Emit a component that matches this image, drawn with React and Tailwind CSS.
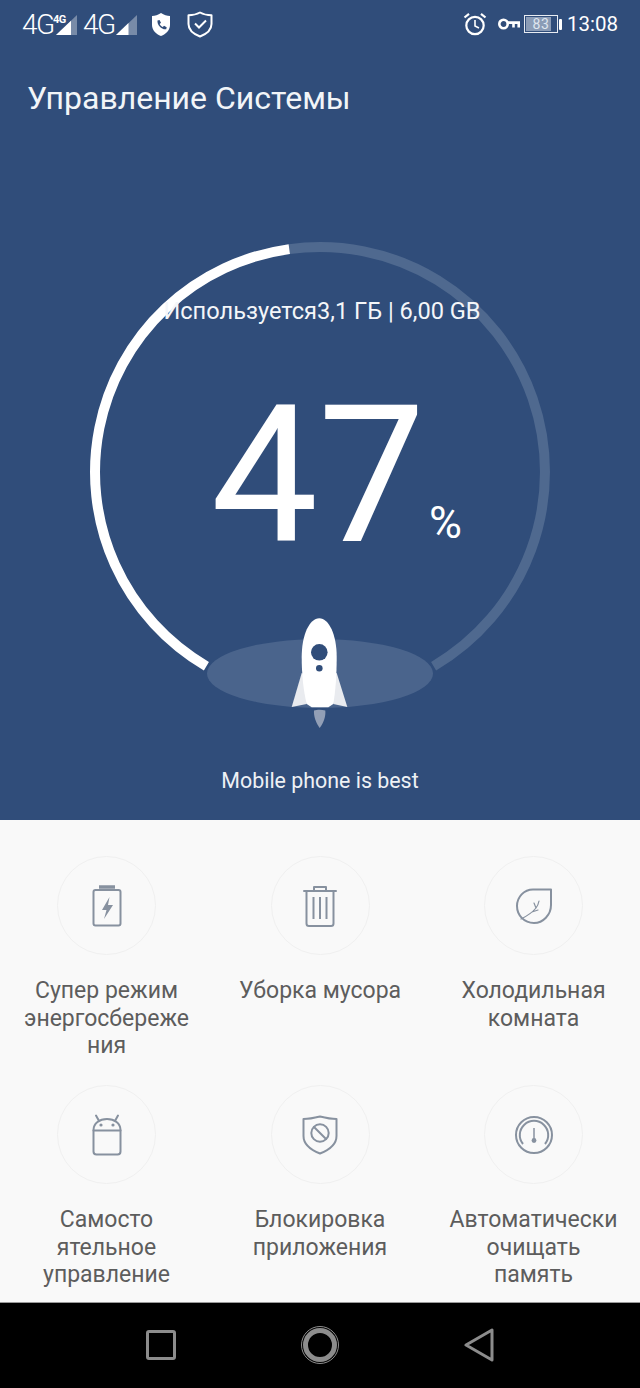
import React from 'react';

const FONT = { fontFamily: 'Roboto, "Noto Sans", sans-serif' };

// иконки строки состояния
const Signal = ({ full }) => (
  <svg width="21" height="20" viewBox="0 0 21 20">
    <path d="M21 0V20H0Z" fill="#fff" fillOpacity="0.35" />
    <path d={full ? 'M15 5.7V20H0Z' : 'M12.5 8.1V20H0Z'} fill="#fff" />
  </svg>
);

const PhoneShield = () => (
  <svg width="20" height="25" viewBox="0 0 20 25">
    <path d="M10 1C13 3 16 4 19 4V13C19 18 15 22 10 24C5 22 1 18 1 13V4C4 4 7 3 10 1Z" fill="#fff" />
    <path d="M6.5 8.5L8.5 8L10 10.8L8.7 12C9.3 13.4 10.3 14.4 11.8 15L13 13.7L15.7 15.2L15.2 17.3C11 18 5.8 13 6.5 8.5Z" fill="#304d7a" />
  </svg>
);

const CheckShield = () => (
  <svg width="26" height="27" viewBox="0 0 26 27" fill="none" stroke="#fff">
    <path d="M13 1.5C16.5 3.5 20 4.2 24.5 4.2V13C24.5 18.5 19.5 23 13 25.5C6.5 23 1.5 18.5 1.5 13V4.2C6 4.2 9.5 3.5 13 1.5Z" strokeWidth="2" strokeLinejoin="round" />
    <path d="M8 12.5L12 16.5L19 9.5" strokeWidth="2" />
  </svg>
);

const Alarm = () => (
  <svg width="24" height="24" viewBox="0 0 24 24" fill="none" stroke="#fff" strokeWidth="2.2">
    <circle cx="12" cy="13.5" r="8.7" />
    <path d="M12 8V14L16 16" strokeWidth="1.6" />
    <path d="M1.5 5.5L6 1.8M22.5 5.5L18 1.8" />
  </svg>
);

const VpnKey = () => (
  <svg width="22" height="12" viewBox="0 0 22 12" fill="none" stroke="#fff" strokeWidth="2.6">
    <circle cx="5.5" cy="6" r="4.2" />
    <path d="M9.5 4.6H20.7V9.5M15.5 4.6V9.5" />
  </svg>
);

const Battery = () => (
  <div className="flex items-center gap-[1px]">
    <div className="relative w-[34px] h-[18px] border border-[#e8ecf2] p-[1px] flex">
      <div className="w-[83%] bg-[#8b9cb6]" />
      <span className="absolute inset-0 flex items-center justify-center text-[14px] leading-none text-[#dfe5ee] tracking-[0.5px]">83</span>
    </div>
    <div className="w-[3px] h-[11px] bg-white rounded-[1px]" />
  </div>
);

const StatusBar = () => (
  <div className="h-[48px] flex items-start justify-between pl-[22px] pr-[22px] pt-[11px] text-white">
    <div className="flex items-center">
      <span className="w-[31px] text-[28px] leading-[26px] tracking-[-1.5px] font-light">4G</span>
      <div className="relative w-[24px] h-[20px] flex justify-end">
        <Signal full />
        <span className="absolute left-0 top-[-1px] text-[11px] leading-[11px] font-bold tracking-[-0.5px]">4G</span>
      </div>
      <span className="ml-[6px] w-[30px] text-[28px] leading-[26px] tracking-[-1.5px] font-light">4G</span>
      <div className="ml-[3px] h-[20px]">
        <Signal />
      </div>
      <div className="ml-[14px]"><PhoneShield /></div>
      <div className="ml-[16px]"><CheckShield /></div>
    </div>
    <div className="flex items-center">
      <Alarm />
      <div className="ml-[11px]"><VpnKey /></div>
      <div className="ml-[4px]"><Battery /></div>
      <span className="ml-[5px] text-[20.5px] leading-[26px]">13:08</span>
    </div>
  </div>
);

// кольцо памяти: трек и заполненная часть
const Gauge = () => (
  <svg className="absolute left-[85px] top-[237px]" width="470" height="445" viewBox="0 0 470 445" fill="none">
    <path d="M204.3 12.1A225 225 0 0 1 348.6 429.2" stroke="#4f698f" strokeWidth="10" />
    <path d="M204.3 12.1A225 225 0 0 0 121.4 429.2" stroke="#fff" strokeWidth="10" />
  </svg>
);

const Rocket = () => (
  <svg width="58" height="112" viewBox="0 0 58 112">
    <path d="M10.7 56L0.7 90L15.7 87L20 60Z" fill="#e9ebef" />
    <path d="M45.7 56L56.3 90L42.3 87L37 60Z" fill="#e9ebef" />
    <path d="M28.3 1.3C38 1.3 45.7 18 45.7 40C45.7 58 44.5 74 42.3 87L37.3 90.3H20.7L15.7 87C12.5 74 10.7 58 10.7 40C10.7 18 18.5 1.3 28.3 1.3Z" fill="#fff" />
    <circle cx="28.3" cy="35.3" r="8.3" fill="#304d7a" />
    <circle cx="28.3" cy="51.3" r="3.3" fill="#304d7a" />
    <path d="M23 93.5C26 92.5 31 92.5 34.3 93.5C35 99 32.5 106 28.7 111C25 106 22.5 99 23 93.5Z" fill="#929fb6" />
  </svg>
);

const Hero = () => (
  <div className="relative h-[820px] bg-[#304d7a] text-white flex flex-col shrink-0">
    <StatusBar />
    <h1 className="pl-[27px] pt-[30px] text-[32px] leading-[40px] font-normal text-[#f2f5f8]">Управление Системы</h1>
    <Gauge />
    <p className="relative mt-[178px] text-center pl-[4px] text-[23.6px] leading-[30px] text-[#f4f6f9]">Используется3,1 ГБ | 6,00 GB</p>
    <div className="relative mt-[50px] h-[200px] flex justify-center">
      <span className="text-[191px] leading-[200px] text-white ml-[-4px]">47</span>
      <span className="absolute left-[429px] top-[122px] text-[45px] leading-[50px]">%</span>
    </div>
    <div className="relative mt-[41px] h-[112px] flex justify-center">
      <div className="absolute left-[207px] top-[22px] w-[226px] h-[69px] rounded-[50%] bg-[#4a648c]" />
      <div className="relative h-[112px]"><Rocket /></div>
    </div>
    <p className="mt-[38px] text-center text-[21.4px] leading-[28px] text-[#eef1f5]">Mobile phone is best</p>
  </div>
);

const ICON = { fill: 'none', stroke: '#87919f', strokeWidth: 2, strokeLinecap: 'round', strokeLinejoin: 'round' };

const BatteryIcon = () => (
  <svg width="30" height="42" viewBox="0 0 30 42" {...ICON}>
    <path d="M7 2H23" strokeWidth="3.5" strokeLinecap="butt" />
    <rect x="1.5" y="5" width="27" height="35.5" rx="2" />
    <path d="M17.5 12L10 25H14.5L12 34L21 20H16Z" fill="#87919f" stroke="none" />
  </svg>
);

const TrashIcon = () => (
  <svg width="34" height="42" viewBox="0 0 34 42" {...ICON}>
    <path d="M1 6H33" />
    <path d="M11 6V2H23V6" />
    <path d="M3.5 6V38.5C3.5 40 4.5 41 6 41H28C29.5 41 30.5 40 30.5 38.5V6" />
    <path d="M10.5 12V34M17 12V34M23.5 12V34" strokeLinecap="butt" />
  </svg>
);

const LeafIcon = () => (
  <svg width="36" height="36" viewBox="0 0 36 36" {...ICON}>
    <path d="M35 1.5H17C8 1.5 1 9 1 18C1 27 8 35 18 35C27 35 35 27 35 17Z" />
    <path d="M5 31C11 28 16 25 20 20C21.5 18 22.5 15.5 23 13M20 20L18 15M16 24L22 22" strokeWidth="1.2" />
  </svg>
);

const AndroidIcon = () => (
  <svg width="30" height="42" viewBox="0 0 30 42" {...ICON}>
    <path d="M1.5 16C1.5 9.5 7.5 5 15 5C22.5 5 28.5 9.5 28.5 16V37.5C28.5 39.5 27.5 40.5 25.5 40.5H4.5C2.5 40.5 1.5 39.5 1.5 37.5Z" />
    <path d="M1.5 16.5H28.5" />
    <path d="M6.5 6L4 1.5M23.5 6L26 1.5" />
    <circle cx="9" cy="11" r="1.6" fill="#87919f" stroke="none" />
    <circle cx="21" cy="11" r="1.6" fill="#87919f" stroke="none" />
  </svg>
);

const ShieldBlockIcon = () => (
  <svg width="36" height="40" viewBox="0 0 36 40" {...ICON}>
    <path d="M18 1.5C24 3 29 4 34.5 4V21C34.5 29 27 35 18 38.5C9 35 1.5 29 1.5 21V4C7 4 12 3 18 1.5Z" />
    <circle cx="18" cy="18" r="8.7" />
    <path d="M12 12L24 24" />
  </svg>
);

const GaugeIcon = () => (
  <svg width="40" height="40" viewBox="0 0 40 40" {...ICON} strokeLinecap="butt">
    <circle cx="20" cy="20" r="18" />
    <path d="M9 29A14.2 14.2 0 1 1 31 29" />
    <path d="M20 13V25" strokeWidth="1.5" />
    <circle cx="20" cy="25.5" r="2.4" fill="#87919f" stroke="none" />
  </svg>
);

const TOOLS = [
  { id: 'power', icon: BatteryIcon, lines: ['Супер режим', 'энергосбереже', 'ния'] },
  { id: 'trash', icon: TrashIcon, lines: ['Уборка мусора'] },
  { id: 'cool', icon: LeafIcon, lines: ['Холодильная', 'комната'] },
  { id: 'auto', icon: AndroidIcon, lines: ['Самосто', 'ятельное', 'управление'] },
  { id: 'lock', icon: ShieldBlockIcon, lines: ['Блокировка', 'приложения'] },
  { id: 'clean', icon: GaugeIcon, lines: ['Автоматически', 'очищать', 'память'] },
];

const Tool = ({ icon: Icon, lines }) => (
  <div className="flex flex-col items-center">
    <div className="w-[99px] h-[99px] rounded-full border border-[#f0f0f0] flex items-center justify-center">
      <Icon />
    </div>
    <div className="mt-[22px] text-center text-[23px] leading-[27.5px] text-[#5d5d5d] whitespace-nowrap">
      {lines.map(line => <div key={line}>{line}</div>)}
    </div>
  </div>
);

const NavBar = () => (
  <div className="flex-1 bg-black border-t border-[#9a9a9a] flex items-center justify-center gap-[127px] pb-[1px]">
    <div className="w-[30px] h-[30px] border-[3px] border-[#8c8c8c] rounded-[3px]" />
    <div className="w-[34px] h-[34px] rounded-full border-[5px] border-[#8c8c8c] outline outline-[1px] outline-offset-[1px] outline-[#8c8c8c]" />
    <svg width="30" height="34" viewBox="0 0 30 34" fill="none">
      <path d="M28 2V32L2 17Z" stroke="#8c8c8c" strokeWidth="3" strokeLinejoin="round" />
    </svg>
  </div>
);

const App = () => (
  <div className="w-[640px] h-[1388px] flex flex-col overflow-hidden" style={FONT}>
    <Hero />
    <div className="h-[482px] shrink-0 bg-[#f9f9f9] pt-[36px] grid grid-cols-[213px_214px_213px] grid-rows-[229px_auto]">
      {TOOLS.map(({ id, ...tool }) => <Tool key={id} {...tool} />)}
    </div>
    <NavBar />
  </div>
);

export default App;
